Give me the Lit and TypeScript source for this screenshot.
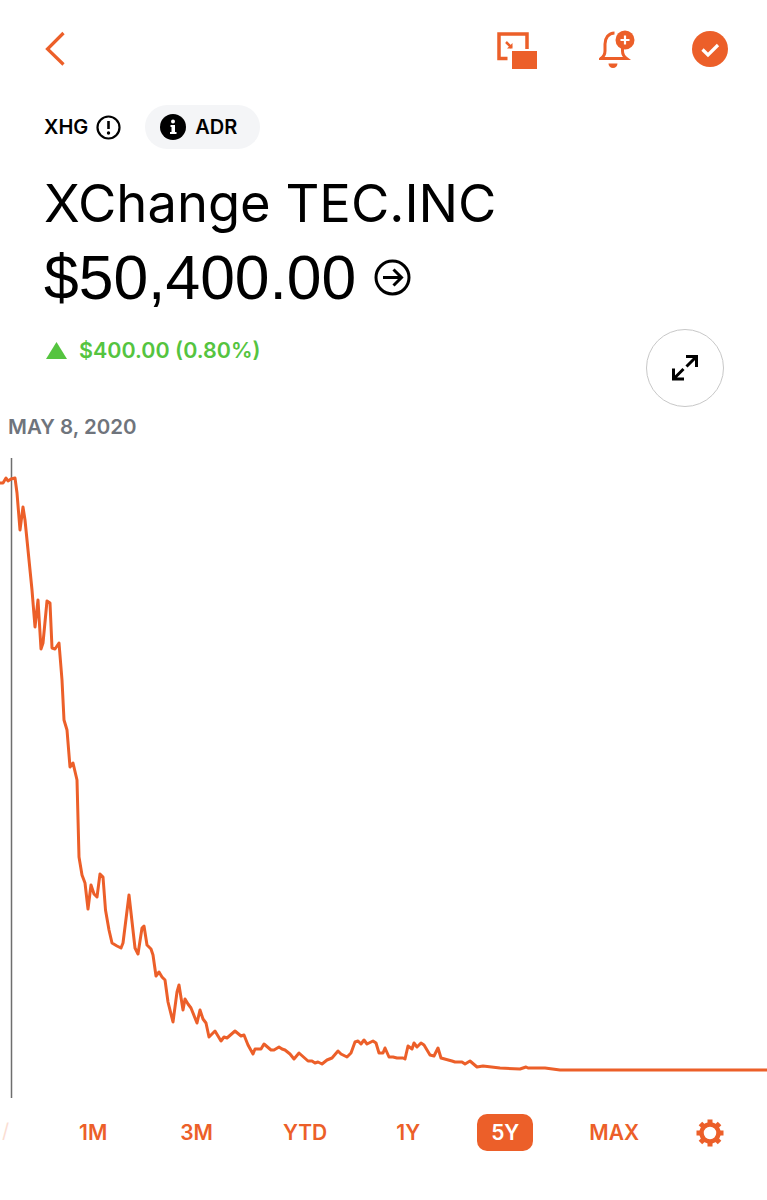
import { LitElement, html, css, svg } from "lit";
import { customElement } from "lit/decorators.js";

const O = "#ec5f29";
const pts = "0,483 3,483 6,478 8,481 11,479 15,478 17,493 20,530 23,507 25,520 28,550 32,590 35,627 38,600 41,649 43,643 47,601 50,603 52,648 55,649 59,643 62,680 64,720 67,730 70,767 73,763 77,780 79,857 82,875 85,883 88,909 91,885 94,894 97,897 100,874 103,877 105.5,910 109,930 112,943 117,946 121,948 123,943 129,895 135,948 138,954 142,928 144,926 147,945 151,949 153,955 156,976 159,972 162,977 165,980 168,1002 173,1022 177,992 179,985 183,1010 185,999 188,1004 191,1008 197,1023 200,1010 203,1019 206,1023 209,1037 215,1031 221,1041 224,1037 227,1038 235,1031 241,1036 244,1035 248,1045 253,1054 255,1049 261,1049 264,1044 271,1050 274,1050 279,1047 282,1049 285,1050 290,1054 294,1059 299,1053 308,1061 312,1061 315,1063 318,1062 322,1064 327,1060 332,1058 338,1051 341,1054 347,1057 351,1053 355,1042 358,1041 361,1044 364,1040 367,1044 373,1041 376,1043 379,1053 383,1053 385,1048 389,1057 393,1057 397,1058 403,1058 405,1059 408,1046 412,1049 414,1043 417,1047 421,1043 424,1045 430,1055 434,1056 438,1048 441,1058 452,1061 455,1062 462,1062 465,1064 470,1061 477,1067 483,1066 500,1068 520,1069 526,1067 528,1068 537,1068 545,1068 560,1070 767,1070"
  .split(" ")
  .map((p) => {
    const [x, y] = p.split(",");
    return `${x},${+y - 458}`;
  })
  .join(" ");

@customElement("app-root")
export class AppRoot extends LitElement {
  static styles = css`
    :host {
      display: block;
      width: 767px;
      height: 1200px;
      background: #fff;
      font-family: "Inter", "Liberation Sans", sans-serif;
      color: #000;
      overflow: hidden;
    }
    .top {
      height: 98px;
      display: flex;
      align-items: center;
      padding: 0 39px 0 44px;
      box-sizing: border-box;
    }
    .top svg { display: block; }
    .spacer { flex: 1; }
    .pip { margin: 3px 62px 0 0; }
    .bell { margin-right: 55px; }
    .ticker {
      height: 44px;
      margin-top: 7px;
      display: flex;
      align-items: center;
      padding-left: 44px;
      font-size: 20px;
      font-weight: 600;
    }
    .ticker svg { display: block; }
    .ticker .warn { margin-left: 8px; }
    .pill {
      margin-left: 24px;
      height: 44px;
      width: 115px;
      box-sizing: border-box;
      border-radius: 22px;
      background: #f4f5f7;
      display: flex;
      align-items: center;
      gap: 9px;
      padding-left: 15px;
    }
    .title {
      margin: 19px 0 0 44px;
      font-size: 52.5px;
      line-height: 70px;
      font-weight: 400;
      white-space: nowrap;
    }
    .price {
      margin: 2px 0 0 44px;
      display: flex;
      align-items: center;
      gap: 18px;
      height: 74px;
      font-family: "Liberation Sans", Arial, sans-serif;
      font-size: 62.4px;
      white-space: nowrap;
    }
    .chg-row {
      position: relative;
      height: 72px;
      display: flex;
      align-items: center;
      padding-left: 46px;
      gap: 12px;
      color: #55c43f;
      font-size: 21.500px;
      font-weight: 600;
      box-sizing: border-box;
    }
    .expand {
      position: absolute;
      left: 646px;
      top: 15px;
      width: 78px;
      height: 78px;
      box-sizing: border-box;
      border: 1.5px solid #c8c8c8;
      border-radius: 50%;
      display: flex;
      align-items: center;
      justify-content: center;
    }
    .date {
      margin: 26px 0 0 8px;
      color: #6f747c;
      font-size: 20.5px;
      font-weight: 600;
      line-height: 30px;
    }
    .chart {
      display: block;
      margin-top: 16px;
      width: 767px;
      height: 640px;
    }
    .tabs {
      position: relative;
      margin-top: 16px;
      height: 37px;
      display: flex;
      align-items: center;
      padding-left: 65px;
      color: #ec5f29;
      font-size: 21px;
      font-weight: 600;
    }
    .tab {
      height: 37px;
      padding: 0 14px;
      display: flex;
      align-items: center;
      border-radius: 10px;
      box-sizing: border-box;
    }
    .tab.g1 { margin-right: 45px; }
    .tab.g2 { margin-right: 42px; }
    .tab.g3 { margin-right: 41px; }
    .tab.g4 { margin-right: 43px; }
    .tab.on { background: #ec5f29; color: #fff; margin-right: 42px; }
    .tab.g5 { margin-right: 43px; }
    .cut {
      position: absolute;
      left: 2px;
      top: 5px;
      font-size: 20px;
      font-weight: 400;
      opacity: 0.2;
    }
    .gear { display: block; }
  `;

  render() {
    return html`
      <div class="top">
        <svg width="22" height="36" viewBox="0 0 22 36" fill="none" stroke=${O} stroke-width="3.200">
          <path d="M19.500 2 3.500 18l16 15.500" />
        </svg>
        <div class="spacer"></div>
        <svg class="pip" width="40" height="37" viewBox="0 0 40 37" fill="none">
          <path d="M10.500 26.500H2V2h28v15" stroke=${O} stroke-width="3.500" />
          <rect x="15" y="19" width="25" height="18" fill=${O} />
          <path d="M9 10l5.500 5.500" stroke=${O} stroke-width="2.500" />
          <path d="M15.500 11v5.500H10" fill=${O} />
        </svg>
        <svg class="bell" width="38" height="40" viewBox="0 0 38 40" fill="none">
          <path d="M15.500 4C9.500 4 6 9 6 15v7c0 4-2 6-4 7.500h25.500c-2-1.500-4-3.500-4-7.500v-3" stroke=${O} stroke-width="3" />
          <path d="M1 28h27v3H1z" fill=${O} />
          <path d="M9.500 34.500h9a4.500 4.500 0 0 1-9 0z" fill=${O} />
          <circle cx="26" cy="11" r="9.500" fill=${O} />
          <path d="M26 6.500v9M21.500 11h9" stroke="#fff" stroke-width="2.200" />
        </svg>
        <svg width="36" height="36" viewBox="0 0 36 36" fill="none">
          <circle cx="18" cy="18" r="18" fill=${O} />
          <path d="M10.500 18.500l5.500 5.500 10-10" stroke="#fff" stroke-width="3.200" />
        </svg>
      </div>
      <div class="ticker">
        <span>XHG</span>
        <svg class="warn" width="25" height="25" viewBox="0 0 25 25" fill="none">
          <circle cx="12.500" cy="12.500" r="11" stroke="#000" stroke-width="2.200" />
          <path d="M12.500 6v8" stroke="#000" stroke-width="2.600" />
          <circle cx="12.500" cy="18" r="1.700" fill="#000" />
        </svg>
        <div class="pill">
          <svg width="26" height="26" viewBox="0 0 26 26">
            <circle cx="13" cy="13" r="13" fill="#000" />
            <circle cx="13" cy="7.500" r="2" fill="#fff" />
            <path d="M10.500 11H15v7h1.500v2h-6.500v-2h1.500v-5h-1z" fill="#fff" />
          </svg>
          <span>ADR</span>
        </div>
      </div>
      <div class="title">XChange TEC.INC</div>
      <div class="price">
        <span>$50,400.00</span>
        <svg width="37" height="37" viewBox="0 0 37 37" fill="none" stroke="#000">
          <circle cx="18.500" cy="18.500" r="16.500" stroke-width="3" />
          <path d="M9 18.500h18M19.500 10.500l8 8-8 8" stroke-width="3" />
        </svg>
      </div>
      <div class="chg-row">
        <svg width="21" height="17" viewBox="0 0 21 17"><path d="M10.500 0 21 17H0z" fill="#55c43f" /></svg>
        <span>$400.00 (0.80%)</span>
        <div class="expand">
          <svg width="28" height="28" viewBox="0 0 28 28" fill="none" stroke="#000" stroke-width="3">
            <path d="M15 2.500h10.500V13M25.500 2.500 15.500 12.500" />
            <path d="M2.500 14.500v10.500H13M2.500 25 12.500 15" />
          </svg>
        </div>
      </div>
      <div class="date">MAY 8, 2020</div>
      <svg class="chart" viewBox="0 0 767 640" fill="none">
        <path d="M11.500 0v640" stroke="#6e6e6e" stroke-width="1.500" />
        ${svg`<polyline points=${pts} stroke=${O} stroke-width="3" stroke-linejoin="round" />`}
      </svg>
      <div class="tabs">
        <span class="cut">/</span>
        <div class="tab g1">1M</div>
        <div class="tab g2">3M</div>
        <div class="tab g3">YTD</div>
        <div class="tab g4">1Y</div>
        <div class="tab on">5Y</div>
        <div class="tab g5">MAX</div>
        <svg class="gear" width="28" height="28" viewBox="0 0 28 28">
          <circle cx="14" cy="14" r="8.500" fill="none" stroke=${O} stroke-width="4.500" />
          <g fill=${O}>
            ${[0, 45, 90, 135, 180, 225, 270, 315].map(
              (a) => svg`<rect x="11.500" y="0.500" width="5" height="5" transform="rotate(${a} 14 14)" />`
            )}
          </g>
        </svg>
      </div>
    `;
  }
}
